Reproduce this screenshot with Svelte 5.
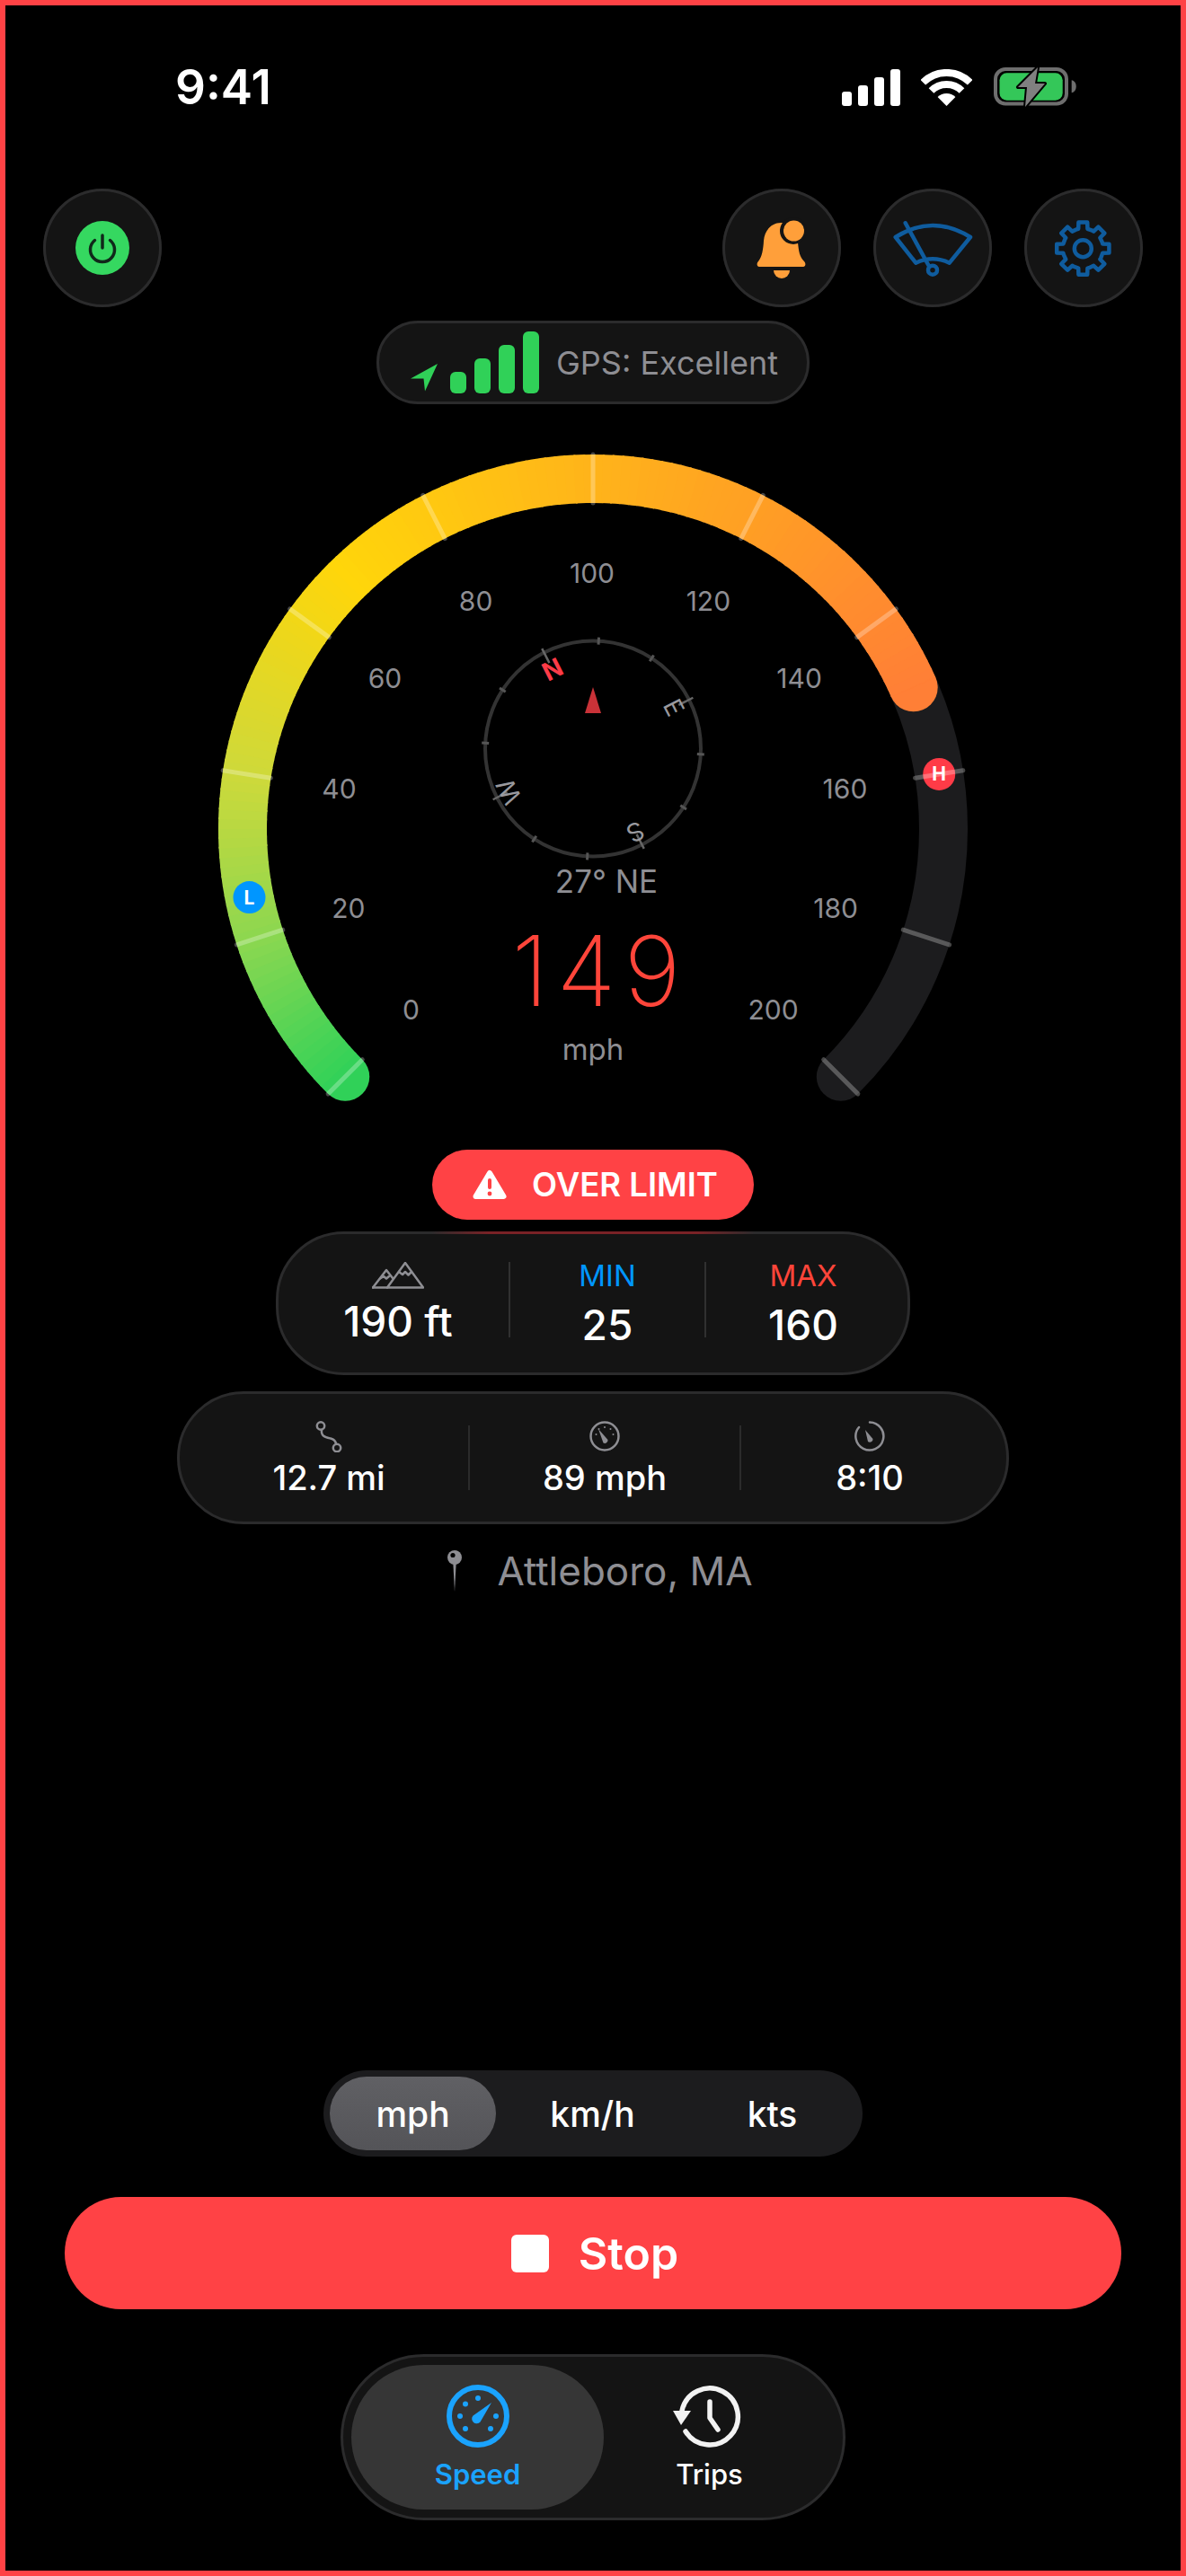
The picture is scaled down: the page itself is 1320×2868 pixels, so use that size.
<script>
  // gauge geometry: 270 degree sweep, 0 sits 45 degrees below the left horizontal
  const cx = 460;
  const cy = 443;
  const r = 390;
  const speed = 149;
  const maxSpeed = 200;

  const polar = (radius, deg, ox = cx, oy = cy) => {
    const a = ((deg - 90) * Math.PI) / 180;
    return [ox + radius * Math.cos(a), oy + radius * Math.sin(a)];
  };
  const speedAngle = (v) => -135 + (v / maxSpeed) * 270;
  const arc = (from, to, radius = r) => {
    const [x1, y1] = polar(radius, from);
    const [x2, y2] = polar(radius, to);
    const large = to - from > 180 ? 1 : 0;
    return `M${x1.toFixed(2)} ${y1.toFixed(2)}A${radius} ${radius} 0 ${large} 1 ${x2.toFixed(2)} ${y2.toFixed(2)}`;
  };

  const stops = [
    [0, [48, 209, 88]],
    [0.1, [140, 215, 80]],
    [0.2, [206, 217, 58]],
    [0.335, [255, 214, 10]],
    [0.6, [255, 159, 36]],
    [0.745, [255, 127, 54]],
    [1, [255, 69, 58]]
  ];
  const colorAt = (t) => {
    let i = 0;
    while (i < stops.length - 2 && t > stops[i + 1][0]) i++;
    const [t0, c0] = stops[i];
    const [t1, c1] = stops[i + 1];
    const k = Math.min(1, Math.max(0, (t - t0) / (t1 - t0)));
    const c = c0.map((v, n) => Math.round(v + (c1[n] - v) * k));
    return `rgb(${c[0]},${c[1]},${c[2]})`;
  };

  // the coloured arc is a run of short slices so the hue follows the angle
  const startDeg = speedAngle(0);
  const endDeg = speedAngle(speed);
  const slices = [];
  for (let d = startDeg; d < endDeg; d += 1.5) {
    const next = Math.min(d + 1.5, endDeg);
    slices.push({
      d: arc(d, Math.min(next + 0.3, endDeg)),
      color: colorAt((d + 0.75 - startDeg) / 270)
    });
  }
  const startCap = polar(r, startDeg);
  const endCap = polar(r, endDeg);

  const marks = [];
  for (let v = 0; v <= maxSpeed; v += 20) {
    const a = speedAngle(v);
    const [x1, y1] = polar(r - 27, a);
    const [x2, y2] = polar(r + 27, a);
    const [lx, ly] = polar(285, a);
    marks.push({ v, x1, y1, x2, y2, lx, ly });
  }

  const low = polar(r, speedAngle(25));
  const high = polar(r, speedAngle(160));

  // compass dial, turned by the heading
  const heading = 27;
  const ccx = 460;
  const ccy = 353.5;
  const dialTicks = [];
  for (let i = 0; i < 12; i++) {
    const a = i * 30 - heading;
    const major = i % 3 === 0;
    const [x1, y1] = polar(major ? 107 : 116, a, ccx, ccy);
    const [x2, y2] = polar(major ? 125 : 124, a, ccx, ccy);
    dialTicks.push({ x1, y1, x2, y2, major });
  }
  const dialLetters = [
    { t: 'N', a: 0, rad: 99 },
    { t: 'E', a: 90, rad: 101 },
    { t: 'S', a: 180, rad: 104 },
    { t: 'W', a: 270, rad: 105 }
  ].map((l) => {
    const a = l.a - heading;
    const [x, y] = polar(l.rad, a, ccx, ccy);
    return { ...l, x, y, rot: a };
  });

  // settings cog outline
  const gearPath = (() => {
    const c = [65.3, 66.7];
    const pts = [];
    for (let i = 0; i < 8; i++) {
      const a = i * 45;
      const at = (rad, deg) => polar(rad, deg, c[0], c[1]);
      pts.push(at(22.5, a - 22.5 + 5), at(22.5, a - 13), at(29.5, a - 9.5), at(29.5, a + 9.5), at(22.5, a + 13));
    }
    return 'M' + pts.map((p) => p[0].toFixed(1) + ' ' + p[1].toFixed(1)).join('L') + 'Z';
  })();

  const units = ['mph', 'km/h', 'kts'];
  const cellBars = [16, 23, 32, 41];
  const gpsBars = [24, 39, 54, 69];

  const speedDots = [[0, -20], [-14, -13.5], [-20, 0], [-14, 14], [14, 14], [20, 0]];
</script>

<div class="phone">
  <header class="status">
    <span class="time">9:41</span>
    <div class="status-icons">
      <div class="cell">
        {#each cellBars as h}
          <i class="cell-bar" style="height:{h}px"></i>
        {/each}
      </div>
      <svg class="wifi" width="57" height="41" viewBox="0 0 57 41">
        <path d="M2.3 14.8A37 37 0 0 1 54.7 14.8" fill="none" stroke="#fff" stroke-width="8" />
        <path d="M11.5 24A24 24 0 0 1 45.5 24" fill="none" stroke="#fff" stroke-width="8" />
        <path d="M28.5 41L18.6 31.1A14 14 0 0 1 38.4 31.1Z" fill="#fff" />
      </svg>
      <svg class="battery" width="94" height="48" viewBox="0 0 94 48">
        <rect x="3" y="4" width="79" height="38.5" rx="11" fill="none" stroke="#6e6e6e" stroke-width="4" />
        <rect x="7.5" y="8.3" width="70.2" height="30.4" rx="8" fill="#34c759" />
        <path d="M87.7 16.3c3 .5 5 3 5 7s-2 6.500-5 7z" fill="#6e6e6e" />
        <path d="M50 2L28 24H38L36 46L58 20H47Z" fill="#808080" stroke="#000" stroke-width="4" stroke-linejoin="round" paint-order="stroke" />
      </svg>
    </div>
  </header>

  <div class="top-row">
    <button class="round" aria-label="Power">
      <span class="power">
        <svg width="60" height="60" viewBox="0 0 60 60">
          <path d="M21.500 21.500A13.500 13.500 0 1 0 38.500 21.500" fill="none" stroke="#10281a" stroke-width="3.500" stroke-linecap="round" />
          <path d="M30 16V30" fill="none" stroke="#10281a" stroke-width="3.500" stroke-linecap="round" />
        </svg>
      </span>
    </button>
    <div class="top-right">
      <button class="round" aria-label="Alerts">
        <svg width="132" height="132" viewBox="0 0 132 132">
          <path d="M65.500 38C54 38 47 47 46 58C45.500 68 44 76 40 81C38 83 38 87 41 87H90C93 87 93 83 91 81C86 76 85 70 84 60C83 47 76 38 65.500 38Z" fill="#ff9f3a" />
          <path d="M57 91H75A9 9 0 0 1 57 91Z" fill="#ff9f3a" />
          <circle cx="79" cy="47" r="15" fill="#141414" />
          <circle cx="79.500" cy="47" r="11.500" fill="#ff9f3a" />
        </svg>
      </button>
      <button class="round" aria-label="Wipers">
        <svg width="132" height="132" viewBox="0 0 132 132">
          <g fill="none" stroke="#0f5c9e" stroke-width="4.500" stroke-linecap="round" stroke-linejoin="round">
            <path d="M24.700 54Q66 28 108 54L84.700 82.700Q66 74 47.300 82.700Z" />
            <path d="M35.700 38.300L61.500 85.500" />
            <circle cx="66" cy="90.700" r="5" />
          </g>
        </svg>
      </button>
      <button class="round" aria-label="Settings">
        <svg width="132" height="132" viewBox="0 0 132 132">
          <path d={gearPath} fill="none" stroke="#0f5c9e" stroke-width="4.500" stroke-linejoin="round" />
          <circle cx="65.300" cy="66.700" r="9.500" fill="none" stroke="#0f5c9e" stroke-width="4.500" />
        </svg>
      </button>
    </div>
  </div>

  <div class="gps">
    <svg class="gps-arrow" width="32" height="32" viewBox="0 0 32 32">
      <path d="M31 1L1 17.500H15.500L17 31.500Z" fill="#30d158" />
    </svg>
    <div class="gps-bars">
      {#each gpsBars as h}
        <i class="gps-bar" style="height:{h}px"></i>
      {/each}
    </div>
    <span class="gps-text">GPS: Excellent</span>
  </div>

  <svg class="gauge" width="920" height="780" viewBox="0 0 920 780">
    <path d={arc(startDeg, speedAngle(maxSpeed))} fill="none" stroke="#1c1c1e" stroke-width="54" stroke-linecap="round" />
    <circle cx={startCap[0]} cy={startCap[1]} r="27" fill={colorAt(0)} />
    <circle cx={endCap[0]} cy={endCap[1]} r="27" fill={colorAt((endDeg - startDeg) / 270)} />
    {#each slices as s}
      <path d={s.d} fill="none" stroke={s.color} stroke-width="54" />
    {/each}

    <circle cx={low[0]} cy={low[1]} r="18" fill="#0096ff" />
    <text x={low[0]} y={low[1] + 7.500} class="marker">L</text>
    <circle cx={high[0]} cy={high[1]} r="18" fill="#ff3b47" />
    <text x={high[0]} y={high[1] + 7.500} class="marker">H</text>

    {#each marks as m}
      <line x1={m.x1} y1={m.y1} x2={m.x2} y2={m.y2} stroke="#fff" stroke-opacity="0.27" stroke-width="5" stroke-linecap="round" />
      <text x={m.lx - 1} y={m.ly + 10.500} class="tick-label">{m.v}</text>
    {/each}

    <circle cx={ccx} cy={ccy} r="120" fill="none" stroke="#333" stroke-width="4" />
    {#each dialTicks as t}
      <line x1={t.x1} y1={t.y1} x2={t.x2} y2={t.y2} stroke={t.major ? '#666' : '#555'} stroke-width={t.major ? 2.500 : 3} />
    {/each}
    {#each dialLetters as l}
      <text
        x={l.x}
        y={l.y}
        class="dial-letter"
        class:north={l.t === 'N'}
        transform="rotate({l.rot} {l.x} {l.y})">{l.t}</text>
    {/each}
    <path d="M460 285L469 314H451Z" fill="#c93238" />

    <text x="475" y="514" class="heading">27° NE</text>
    <text x="468" y="640" class="speed">149</text>
    <text x="460" y="700" class="unit">mph</text>
  </svg>

  <div class="alert">
    <svg width="38" height="34" viewBox="0 0 38 34">
      <path d="M19 4L34.500 30H3.500Z" fill="#fff" stroke="#fff" stroke-width="6" stroke-linejoin="round" />
      <rect x="17" y="10" width="4" height="12" rx="2" fill="#ff4245" />
      <circle cx="19" cy="27" r="2.400" fill="#ff4245" />
    </svg>
    <span>OVER LIMIT</span>
  </div>

  <div class="card stats">
    <div class="stat">
      <svg class="mountain" width="58" height="30" viewBox="0 0 58 30">
        <g fill="none" stroke="#8e8e93" stroke-width="2.500" stroke-linejoin="round" stroke-linecap="round">
          <path d="M1 28.500L16 9L23 18" />
          <path d="M17 28.500L37 1L57 28.500Z" />
          <path d="M1 28.500H17" />
          <path d="M30 11L34 14L37 11L40.500 14.500L44 11" />
          <path d="M9 18.500L13 16L16 18.500L19 16" />
        </g>
      </svg>
      <span class="value">190 ft</span>
    </div>
    <div class="stat limit">
      <span class="caption min">MIN</span>
      <span class="value">25</span>
    </div>
    <div class="stat limit">
      <span class="caption max">MAX</span>
      <span class="value">160</span>
    </div>
  </div>

  <div class="card trip">
    <div class="trip-cell">
      <svg width="36" height="36" viewBox="0 0 36 36">
        <g fill="none" stroke="#8e8e93" stroke-width="2.500" stroke-linecap="round">
          <circle cx="9" cy="6.500" r="4.200" />
          <circle cx="27" cy="31" r="4.200" />
          <path d="M10 11C9 18 14 19 20 20.500C24 21.500 25.500 23.500 26 26.500" />
        </g>
      </svg>
      <span class="trip-value">12.7 mi</span>
    </div>
    <div class="trip-cell">
      <svg width="36" height="36" viewBox="0 0 36 36">
        <circle cx="18" cy="18" r="15.500" fill="none" stroke="#8e8e93" stroke-width="2.500" />
        <path d="M11 10L21.500 22A3.400 3.400 0 0 1 16.500 25.500Z" fill="#8e8e93" />
        <g fill="#8e8e93">
          <circle cx="8.500" cy="16" r="1" /><circle cx="11.500" cy="10" r="1" /><circle cx="18" cy="8" r="1" />
          <circle cx="24.500" cy="10" r="1" /><circle cx="27.500" cy="16" r="1" />
        </g>
      </svg>
      <span class="trip-value">89 mph</span>
    </div>
    <div class="trip-cell">
      <svg width="36" height="36" viewBox="0 0 36 36">
        <path d="M18 2.500A15.500 15.500 0 1 1 6 8" fill="none" stroke="#8e8e93" stroke-width="2.500" stroke-linecap="round" />
        <path d="M13 11L21.500 21A3.400 3.400 0 0 1 16 24Z" fill="#8e8e93" />
      </svg>
      <span class="trip-value">8:10</span>
    </div>
  </div>

  <div class="place">
    <svg width="16" height="46" viewBox="0 0 16 46">
      <path d="M6.300 14H9.700L8 46Z" fill="#8e8e93" />
      <circle cx="8" cy="8" r="8" fill="#8e8e93" />
      <circle cx="6" cy="5.500" r="2.600" fill="#000" />
    </svg>
    <span>Attleboro, MA</span>
  </div>

  <div class="segment">
    {#each units as u, i}
      <span class="seg-item" class:on={i === 0}>{u}</span>
    {/each}
  </div>

  <button class="stop">
    <i class="stop-square"></i>
    <span>Stop</span>
  </button>

  <nav class="tabs">
    <div class="tab active">
      <svg width="70" height="70" viewBox="0 0 70 70">
        <circle cx="35" cy="35" r="32" fill="none" stroke="#1aa3ff" stroke-width="6" />
        <g fill="#1aa3ff">
          {#each speedDots as d}
            <circle cx={35 + d[0]} cy={35 + d[1]} r="3" />
          {/each}
          <path d="M50 20L37.500 41.500A5.200 5.200 0 0 1 29.500 34.500Z" />
        </g>
      </svg>
      <span>Speed</span>
    </div>
    <div class="tab trips">
      <svg width="80" height="70" viewBox="0 1 80 70">
        <g fill="none" stroke="#f2f2f2" stroke-width="5.500" stroke-linecap="round" stroke-linejoin="round">
          <path d="M12 30A31.500 31.500 0 1 1 16 53" />
          <path d="M43 20V38L52 51" />
        </g>
        <path d="M2 30H22L11 46Z" fill="#f2f2f2" />
      </svg>
      <span>Trips</span>
    </div>
  </nav>
</div>

<style>
  :global(body) {
    background: #000;
  }
  .phone {
    box-sizing: border-box;
    width: 1320px;
    height: 2868px;
    border: 6px solid #ff4245;
    background: #000;
    display: flex;
    flex-direction: column;
    align-items: center;
    font-family: Inter, "Liberation Sans", sans-serif;
    color: #fff;
    overflow: hidden;
  }
  button {
    border: 0;
    padding: 0;
    font: inherit;
    color: inherit;
  }
  i {
    display: block;
  }

  .status {
    align-self: stretch;
    height: 90px;
    margin-top: 46px;
    padding: 0 115px 0 189px;
    display: flex;
    align-items: center;
    justify-content: space-between;
  }
  .time {
    font-size: 53px;
    font-weight: 600;
  }
  .status-icons {
    display: flex;
    align-items: center;
    gap: 23px;
  }
  .cell {
    display: flex;
    align-items: flex-end;
    gap: 7px;
    height: 41px;
  }
  .cell-bar {
    width: 11px;
    border-radius: 3px;
    background: #fff;
  }

  .top-row {
    align-self: stretch;
    margin-top: 68px;
    padding: 0 42px;
    display: flex;
    justify-content: space-between;
  }
  .top-right {
    display: flex;
    gap: 36px;
  }
  .round {
    box-sizing: border-box;
    width: 132px;
    height: 132px;
    border-radius: 50%;
    background: #141414;
    box-shadow: inset 0 0 0 3px #2b2b2c;
    display: flex;
    align-items: center;
    justify-content: center;
  }
  .power {
    width: 60px;
    height: 60px;
    border-radius: 50%;
    background: #35d860;
    display: flex;
  }

  .gps {
    box-sizing: border-box;
    width: 482px;
    height: 93px;
    margin-top: 15px;
    padding-left: 34px;
    border: 3px solid #2b2b2c;
    border-radius: 46px;
    background: #141414;
    display: flex;
    align-items: center;
  }
  .gps-arrow {
    align-self: flex-end;
    margin-bottom: 11px;
  }
  .gps-bars {
    display: flex;
    align-items: flex-end;
    gap: 9px;
    margin-left: 13px;
  }
  .gps-bar {
    width: 18px;
    border-radius: 6px;
    background: #30d158;
  }
  .gps-text {
    margin-left: 19px;
    font-size: 36px;
    color: #8e8e93;
    white-space: nowrap;
  }

  .gauge {
    display: block;
    flex: none;
    margin-top: 30px;
  }
  .gauge text {
    font-family: Inter, "Liberation Sans", sans-serif;
    text-anchor: middle;
    fill: #8e8e93;
  }
  .gauge .tick-label {
    font-size: 30px;
  }
  .gauge .marker {
    font-size: 21px;
    font-weight: 700;
    fill: #fff;
  }
  .gauge .dial-letter {
    font-size: 28px;
    dominant-baseline: central;
    fill: #99999e;
  }
  .gauge .dial-letter.north {
    font-weight: 700;
    fill: #ff3b47;
  }
  .gauge .heading {
    font-size: 35px;
  }
  .gauge .speed {
    font-size: 108px;
    font-weight: 200;
    letter-spacing: 9px;
    fill: #ff453a;
  }
  .gauge .unit {
    font-size: 33px;
  }

  .alert {
    box-sizing: border-box;
    width: 358px;
    height: 78px;
    margin-top: 20px;
    padding-left: 45px;
    border-radius: 39px;
    background: #ff4245;
    display: flex;
    align-items: center;
    gap: 28px;
    font-size: 36.500px;
    font-weight: 600;
    white-space: nowrap;
  }

  .card {
    box-sizing: border-box;
    border: 3px solid #2b2b2c;
    background: #141414;
  }
  .stats {
    position: relative;
    width: 706px;
    height: 160px;
    margin-top: 13px;
    padding: 0 10px;
    border-radius: 76px;
    display: grid;
    grid-template-columns: 246px 218px 218px;
    align-items: center;
  }
  /* red spill from the alert pill along the top edge */
  .stats::before {
    content: "";
    position: absolute;
    top: -3px;
    left: 170px;
    right: 170px;
    height: 3px;
    background: linear-gradient(90deg, transparent, #7a2226 18%, #7a2226 82%, transparent);
  }
  .stat {
    height: 84px;
    margin-top: -8px;
    display: flex;
    flex-direction: column;
    align-items: center;
    justify-content: space-between;
  }
  .limit {
    border-left: 2px solid #303030;
  }
  .limit .value {
    margin-bottom: -4px;
  }
  .mountain {
    flex: none;
  }
  .value {
    font-size: 46px;
    font-weight: 500;
    line-height: 36px;
  }
  .caption {
    font-size: 33px;
    line-height: 30px;
  }
  .min {
    color: #0096ff;
  }
  .max {
    color: #ff453a;
  }

  .trip {
    width: 926px;
    height: 148px;
    margin-top: 18px;
    padding: 0 12px 0 11px;
    border-radius: 74px;
    display: grid;
    grid-template-columns: 310px 302px 288px;
    align-items: center;
  }
  .trip-cell {
    height: 72px;
    display: flex;
    flex-direction: column;
    align-items: center;
    justify-content: space-between;
  }
  .trip-cell + .trip-cell {
    border-left: 2px solid #2b2b2b;
  }
  .trip-cell svg {
    margin-top: -6px;
  }
  .trip-value {
    font-size: 38px;
    font-weight: 500;
    line-height: 36px;
    margin-bottom: -4px;
  }

  .place {
    margin-top: 22px;
    margin-left: 16px;
    height: 60px;
    display: flex;
    align-items: center;
    gap: 39px;
    font-size: 44px;
    color: #8e8e93;
  }

  .segment {
    box-sizing: border-box;
    width: 600px;
    height: 96px;
    margin-top: auto;
    padding: 7px;
    border-radius: 48px;
    background: #1c1c1e;
    display: grid;
    grid-template-columns: repeat(3, 185px);
    gap: 15px;
  }
  .seg-item {
    border-radius: 41px;
    display: flex;
    align-items: center;
    justify-content: center;
    font-size: 39px;
    font-weight: 500;
  }
  .seg-item.on {
    background: linear-gradient(#606064, #545458);
  }

  .stop {
    width: 1176px;
    height: 125px;
    margin-top: 45px;
    padding-left: 4px;
    border-radius: 63px;
    background: #ff4245;
    display: flex;
    align-items: center;
    justify-content: center;
    gap: 33px;
    font-size: 50px;
    font-weight: 600;
  }
  .stop-square {
    width: 42px;
    height: 42px;
    border-radius: 6px;
    background: #fff;
  }

  .tabs {
    box-sizing: border-box;
    width: 562px;
    height: 185px;
    margin-top: 50px;
    margin-bottom: 56px;
    padding: 9px;
    border: 3px solid #2b2b2c;
    border-radius: 93px;
    background: #141414;
    display: grid;
    grid-template-columns: 281px 1fr;
  }
  .tab {
    border-radius: 81px;
    display: flex;
    flex-direction: column;
    align-items: center;
    padding-top: 22px;
    gap: 11px;
    font-size: 31px;
    font-weight: 500;
    color: #fff;
  }
  .tab svg {
    display: block;
  }
  .tab.trips {
    padding-right: 22px;
  }
  .tab.trips svg {
    margin-left: -6px;
  }
  .tab.active {
    background: #363636;
    color: #1aa3ff;
    font-weight: 600;
  }
</style>
